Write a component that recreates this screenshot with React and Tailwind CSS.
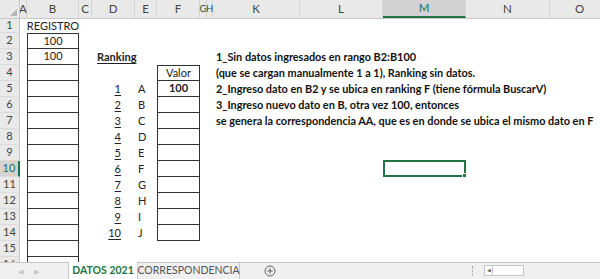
import React from 'react'

const cols = [
  { key: 'A', w: 7 },
  { key: 'B', w: 52 },
  { key: 'C', w: 13 },
  { key: 'D', w: 43 },
  { key: 'E', w: 22 },
  { key: 'F', w: 43 },
  { key: 'G', w: 7 },
  { key: 'H', w: 6 },
  { key: 'K', w: 87 },
  { key: 'L', w: 83 },
  { key: 'M', w: 83 },
  { key: 'N', w: 84 },
  { key: 'O', w: 60 },
]

const notes = {
  3: '1_Sin datos ingresados en rango B2:B100',
  4: '(que se cargan manualmente 1 a 1), Ranking sin datos.',
  5: '2_Ingreso dato en B2 y se ubica en ranking F (tiene fórmula BuscarV)',
  6: '3_Ingreso nuevo dato en B, otra vez 100, entonces',
  7: 'se genera la correspondencia AA, que es en donde se ubica el mismo dato en F',
}

const letters = ['A', 'B', 'C', 'D', 'E', 'F', 'G', 'H', 'I', 'J']

const font = { fontFamily: 'Lato, "Liberation Sans", sans-serif' }

function Cell({ w, className = '', children }) {
  return (
    <div className={`relative h-full shrink-0 ${className}`} style={{ width: w }}>
      {children}
    </div>
  )
}

function Row({ n }) {
  const selected = n === 10
  const bBox = n >= 2
  const fBox = n >= 4 && n <= 14
  const rank = n >= 5 && n <= 14 ? n - 4 : null

  return (
    <div className={`flex ${n === 1 ? 'h-[14px]' : 'h-[16px]'}`}>
      <div
        className={`flex h-full w-[20px] shrink-0 items-center justify-center border-b border-[#dadada] text-[11px] ${
          selected
            ? 'border-r-2 border-r-[#217346] bg-[#d3d3d3] text-[#217346]'
            : 'border-r border-r-[#c8c8c8] bg-[#e9e9e9] text-[#444]'
        }`}
      >
        {n}
      </div>
      <Cell w={7} />
      <Cell
        w={52}
        className={
          bBox
            ? `flex items-center justify-center border-x border-b border-[#333] ${n === 2 ? 'border-t' : ''}`
            : 'flex items-center justify-center'
        }
      >
        <span className="text-[11px] text-[#222]">
          {n === 1 ? 'REGISTRO' : n === 2 || n === 3 ? '100' : ''}
        </span>
      </Cell>
      <Cell w={13} />
      <Cell w={43} className="flex items-center">
        {n === 3 && (
          <span className="pl-[5px] text-[11px] font-bold text-[#222] underline underline-offset-2">Ranking</span>
        )}
        {rank && (
          <span className="w-[29px] text-right text-[11px] text-[#222] underline underline-offset-2">{rank}</span>
        )}
      </Cell>
      <Cell w={22} className="flex items-center">
        {rank && <span className="pl-[3px] text-[11px] text-[#222]">{letters[rank - 1]}</span>}
      </Cell>
      <Cell
        w={43}
        className={
          fBox
            ? `flex items-center justify-center border-x border-b border-[#333] ${n === 4 ? 'border-t' : ''}`
            : ''
        }
      >
        {n === 4 && <span className="text-[11px] text-[#222]">Valor</span>}
        {n === 5 && <span className="text-[11px] font-bold text-[#222]">100</span>}
      </Cell>
      <Cell w={7} />
      <Cell w={6} />
      <Cell w={87} className="flex items-center">
        {notes[n] && (
          <span className="absolute left-[3px] whitespace-nowrap text-[10.9px] font-bold text-[#111]">
            {notes[n]}
          </span>
        )}
      </Cell>
      <Cell w={83} />
      <Cell w={83}>
        {selected && (
          <div className="absolute inset-0 -top-px border-2 border-[#217346]">
            <div className="absolute -bottom-[3px] -right-[3px] h-[5px] w-[5px] border border-white bg-[#217346]" />
          </div>
        )}
      </Cell>
      <Cell w={84} />
      <Cell w={60} />
    </div>
  )
}

export default function App() {
  const rows = Array.from({ length: 16 }, (_, i) => i + 1)

  return (
    <div className="h-[279px] w-[600px] overflow-hidden bg-white" style={font}>
      <div className="h-[262px] overflow-hidden">
        {/* column headers */}
        <div className="flex h-[19px] border-b border-[#c8c8c8] bg-[#e9e9e9] text-[11.5px] text-[#444]">
          <div className="relative h-full w-[20px] shrink-0 border-r border-[#c8c8c8]">
            <div className="absolute bottom-[2px] right-[2px] h-0 w-0 border-b-[7px] border-l-[7px] border-b-[#b5b5b5] border-l-transparent" />
          </div>
          {cols.map(c => (
            <div
              key={c.key}
              className={`flex h-full shrink-0 items-center justify-center border-r border-[#d4d4d4] ${
                c.key === 'M' ? 'border-b-2 border-b-[#217346] bg-[#d3d3d3] text-[#217346]' : ''
              } ${c.key === 'G' || c.key === 'H' ? 'text-[9.5px]' : ''}`}
              style={{ width: c.w }}
            >
              {c.key}
            </div>
          ))}
        </div>
        {rows.map(n => (
          <Row key={n} n={n} />
        ))}
      </div>

      {/* sheet tabs */}
      <div className="relative flex h-[17px] items-stretch border-t border-[#c6c6c6] bg-[#f0f0f0] text-[10.5px]">
        <div className="flex w-[68px] shrink-0 items-center gap-[11px] pl-[18px] text-[7px] text-[#c4c4c4]">
          <span>◀</span>
          <span>▶</span>
        </div>
        <div className="-mt-px flex w-[70px] shrink-0 items-center justify-center border-x border-[#c6c6c6] bg-white font-bold text-[#217346]">
          DATOS 2021
        </div>
        <div className="flex w-[102px] shrink-0 items-center justify-center border-r border-[#c6c6c6] text-[#555]">
          CORRESPONDENCIA
        </div>
        <div className="flex w-[60px] shrink-0 items-center justify-center">
          <svg width="12" height="12" viewBox="0 0 12 12">
            <circle cx="6" cy="6" r="5" fill="none" stroke="#666" strokeWidth="1" />
            <path d="M6 3.3v5.4M3.3 6h5.4" stroke="#666" strokeWidth="1.1" />
          </svg>
        </div>
        <div className="flex-1" />
        <div className="absolute left-[472px] top-[3px] h-[10px] border-l border-dotted border-[#999]" />
        <div className="absolute left-[484px] top-[2px] flex h-[11px] items-stretch">
          <div className="flex w-[9px] items-center justify-center border border-[#c6c6c6] bg-white text-[5px] text-[#666]">◀</div>
          <div className="w-[31px] border-y border-r border-[#c6c6c6] bg-white" />
        </div>
      </div>
    </div>
  )
}
